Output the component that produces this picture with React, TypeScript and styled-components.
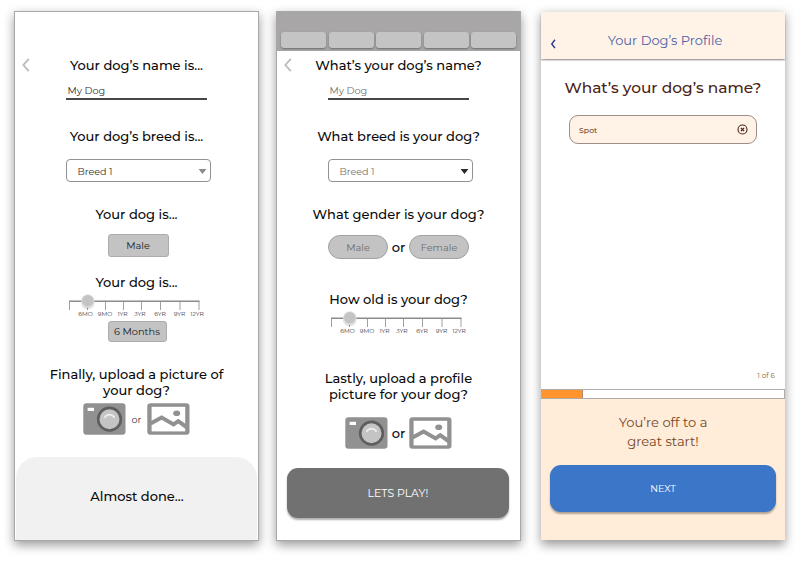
import React from 'react';
import styled, { createGlobalStyle } from 'styled-components';

const GlobalStyle = createGlobalStyle`
  *, *::before, *::after { box-sizing: border-box; }
  body { margin: 0; background: #fff; font-family: Montserrat, Inter, 'Open Sans', sans-serif; }
  button, input { font: inherit; }
`;

const Board = styled.main`
  display: flex;
  align-items: flex-start;
  width: 800px;
  height: 561px;
  padding: 11px 0 0 14px;
  overflow: hidden;
`;

const Phone = styled.section<{ $gap?: number; $bare?: boolean }>`
  display: flex;
  flex-direction: column;
  align-items: center;
  flex: none;
  width: ${p => (p.$bare ? 244 : 245)}px;
  height: 530px;
  margin-left: ${p => p.$gap ?? 0}px;
  border: 1px solid ${p => (p.$bare ? 'transparent' : '#a8a8a8')};
  border-width: ${p => (p.$bare ? '1px 0' : '1px')};
  background: #fff;
  background-clip: padding-box;
  box-shadow: 0 4px 10px rgba(0, 0, 0, 0.4);
`;

const TitleRow = styled.div<{ $top: number }>`
  display: grid;
  grid-template-columns: 28px 1fr 28px;
  align-items: center;
  align-self: stretch;
  margin-top: ${p => p.$top}px;

  svg { justify-self: center; margin-left: -6px; }
`;

const Title = styled.h2<{ $top?: number }>`
  margin: ${p => p.$top ?? 0}px 0 0;
  font-size: 13px;
  font-weight: 500;
  line-height: 18px;
  text-align: center;
  white-space: nowrap;
  color: #080808;
`;

const TwoLineTitle = styled(Title)`
  line-height: 16px;
`;

const UnderlinedField = styled.div<{ $muted?: boolean }>`
  width: 141px;
  height: 20px;
  margin-top: 6px;
  padding: 3px 0 0 1.5px;
  border-bottom: 2px solid #4a4647;
  font-size: 9.7px;
  line-height: 16px;
  color: ${p => (p.$muted ? '#707070' : '#303030')};
`;

const Select = styled.div<{ $muted?: boolean }>`
  display: flex;
  align-items: center;
  justify-content: space-between;
  width: 145px;
  height: 23px;
  margin: 14px 0 0 3px;
  padding: 1px 3px 0 11px;
  border: 1.3px solid #929292;
  border-radius: 4px;
  font-size: 9.6px;
  color: ${p => (p.$muted ? '#707070' : '#303030')};
`;

const Tag = styled.div<{ $top: number; $w: number; $h: number; $shift?: number }>`
  display: grid;
  place-items: center;
  width: ${p => p.$w}px;
  height: ${p => p.$h}px;
  margin: ${p => p.$top}px 0 0 ${p => p.$shift ?? 0}px;
  border: 1px solid #acacac;
  border-radius: 3px;
  background: #c3c3c3;
  font-size: 9.8px;
  color: #202020;
`;

const PillRow = styled.div`
  display: flex;
  align-items: center;
  justify-content: space-between;
  width: 141px;
  height: 24px;
  margin-top: 12px;
`;

const Pill = styled.button`
  width: 60px;
  height: 24px;
  padding: 0;
  border: 1px solid #a2a2a2;
  border-radius: 12px;
  background: #c3c3c3;
  font-size: 9.8px;
  color: #6f6f6f;
`;

const Or = styled.span<{ $small?: boolean }>`
  font-size: ${p => (p.$small ? 9.6 : 13)}px;
  font-weight: ${p => (p.$small ? 400 : 500)};
  color: ${p => (p.$small ? '#333' : '#080808')};
`;

const SliderBox = styled.div`
  width: 141px;
  margin-top: 2px;

  svg { display: block; overflow: visible; }
`;

const Scale = styled.div`
  display: grid;
  grid-template-columns: 19px 20px 15px 20px 20px 19px 16px;
  justify-items: center;
  padding-left: 10px;
  font-size: 6px;
  line-height: 8px;
  white-space: nowrap;
  color: #333;
`;

const UploadRow = styled.div<{ $top: number }>`
  display: flex;
  align-items: center;
  justify-content: space-between;
  width: 107px;
  height: 32px;
  margin-top: ${p => p.$top}px;
`;

const DoneFooter = styled.footer`
  display: grid;
  place-items: center;
  align-self: stretch;
  height: 83px;
  margin: auto 1px 0;
  padding: 0 0 5px 1px;
  border-radius: 21px 21px 0 0;
  background: #f1f1f1;
`;

const TabHeader = styled.header`
  display: flex;
  align-items: flex-start;
  justify-content: space-between;
  align-self: stretch;
  height: 39px;
  padding: 20px 4px 0 4px;
  background: #a8a6a6;
`;

const Tab = styled.div`
  width: 45px;
  height: 16px;
  border-radius: 3px;
  background: #c4c4c4;
  box-shadow: 0 1px 2px rgba(0, 0, 0, 0.35);
`;

const ActionButton = styled.button<{ $primary?: boolean }>`
  width: ${p => (p.$primary ? 226 : 222)}px;
  height: ${p => (p.$primary ? 47 : 50)}px;
  margin-top: ${p => (p.$primary ? 14 : 19)}px;
  margin-left: ${p => (p.$primary ? 0 : -1)}px;
  padding: 0;
  border: 0;
  border-radius: 11px;
  background: ${p => (p.$primary ? '#3b76c9' : '#717171')};
  box-shadow: 0 2px 2px rgba(0, 0, 0, 0.32);
  font-size: ${p => (p.$primary ? 9.6 : 10.9)}px;
  font-weight: 400;
  color: #fff;
`;

const ProfileHeader = styled.header`
  display: grid;
  grid-template-columns: 24px 1fr 20px;
  align-self: stretch;
  height: 47px;
  padding-top: 19px;
  background: #fff3e8;
  box-shadow: 0 1.5px 1.5px rgba(60, 45, 45, 0.45);

  svg { justify-self: center; margin-top: 8px; }
`;

const ProfileTitle = styled.h1`
  margin: 0;
  font-size: 13px;
  font-weight: 400;
  line-height: 18px;
  text-align: center;
  white-space: nowrap;
  color: #4d60a6;
`;

const Question = styled.h2`
  margin: 19px 0 0;
  font-size: 15.4px;
  font-weight: 500;
  line-height: 20px;
  white-space: nowrap;
  color: #4a2114;
`;

const NameField = styled.div`
  display: flex;
  align-items: center;
  justify-content: space-between;
  width: 188px;
  height: 29px;
  margin-top: 17px;
  padding: 0 8px 0 9px;
  border: 1px solid #a08c89;
  border-radius: 9px;
  background: #fff3e8;
  font-size: 7.8px;
  font-weight: 500;
  color: #764524;
`;

const StepCount = styled.div`
  align-self: flex-end;
  margin: auto 10px 8px 0;
  font-size: 7.2px;
  line-height: 10px;
  color: #8a5f44;
`;

const Progress = styled.div`
  flex: none;
  align-self: stretch;
  height: 10px;
  border: 1px solid #b0aaa8;
  background: #fff;
`;

const ProgressFill = styled.div`
  width: 41px;
  height: 100%;
  border-right: 1px solid #b08a6c;
  background: #ff932e;
`;

const ProfileFooter = styled.footer`
  display: flex;
  flex-direction: column;
  align-items: center;
  align-self: stretch;
  height: 141px;
  padding-top: 14px;
  background: #ffedda;
`;

const Cheer = styled.p`
  margin: 0;
  font-size: 13.1px;
  line-height: 19px;
  text-align: center;
  white-space: nowrap;
  color: #764524;
`;

const BackChevron = () => (
  <svg width="8" height="14" viewBox="0 0 8 14" fill="none">
    <path d="M6.8 0.8L1.4 7l5.4 6.2" stroke="#bdbdbd" strokeWidth="1.9" />
  </svg>
);

const Caret = ({ color }: { color: string }) => (
  <svg width="9" height="5" viewBox="0 0 9 5">
    <path d="M0.6 0.1h7.8L4.5 4.9z" fill={color} />
  </svg>
);

const CameraIcon = () => (
  <svg width="43" height="32" viewBox="0 0 43 32">
    <rect x="0.3" y="0.3" width="42.2" height="31.4" rx="3.2" fill="#919191" />
    <rect x="4.6" y="4.8" width="6.4" height="3.2" fill="#fff" />
    <circle cx="26.5" cy="16.2" r="11.3" fill="#c4c4c4" stroke="#5e5e5e" strokeWidth="2.6" />
    <path d="M21.5 14.8c2-4.2 8-4.2 10 0" fill="none" stroke="#ededed" strokeWidth="1.7" />
  </svg>
);

const PictureIcon = () => (
  <svg width="43" height="32" viewBox="0 0 43 32">
    <rect x="0.3" y="0.3" width="42.2" height="31.4" rx="3.2" fill="#919191" />
    <rect x="4.6" y="3.8" width="33.6" height="24.6" fill="#fff" />
    <ellipse cx="29.7" cy="10.3" rx="3.5" ry="2.8" fill="#919191" />
    <path d="M3.6 20.6L14.6 14.6 26.6 21.4 31.2 18.2 39.4 24" fill="none" stroke="#919191" strokeWidth="4" />
  </svg>
);

const TICKS = [3.5, 21.5, 39.5, 57.5, 75.5, 94.5, 114, 133];
const AGES = ['6MO', '9MO', '1YR', '3YR', '6YR', '9YR', '12YR'];

const AgeSlider = () => (
  <SliderBox>
    <svg width="141" height="17" viewBox="0 0 141 17">
      {TICKS.map(x => (
        <path key={x} d={`M${x} 8V17`} stroke="#a0a0a0" strokeWidth="1" />
      ))}
      <path d="M3 8.2H133.5" stroke="#8c8c8c" strokeWidth="1.6" />
      <circle cx="21.8" cy="9.4" r="6.8" fill="#000" opacity="0.12" />
      <circle cx="21.8" cy="8" r="6.7" fill="#e3e3e3" />
      <circle cx="21.8" cy="7.8" r="5.8" fill="#c4c4c4" />
    </svg>
    <Scale>
      {AGES.map(age => (
        <span key={age}>{age}</span>
      ))}
    </Scale>
  </SliderBox>
);

const SummaryScreen = () => (
  <Phone>
    <TitleRow $top={44}>
      <BackChevron />
      <Title>Your dog’s name is...</Title>
    </TitleRow>
    <UnderlinedField>My Dog</UnderlinedField>
    <Title $top={27}>Your dog’s breed is...</Title>
    <Select>
      Breed 1
      <Caret color="#8a8a8a" />
    </Select>
    <Title $top={23}>Your dog is...</Title>
    <Tag $top={11} $w={61} $h={23} $shift={3}>Male</Tag>
    <Title $top={16}>Your dog is...</Title>
    <AgeSlider />
    <Tag $top={3} $w={59} $h={21} $shift={1}>6 Months</Tag>
    <TwoLineTitle $top={24}>
      Finally, upload a picture of
      <br />
      your dog?
    </TwoLineTitle>
    <UploadRow $top={5}>
      <CameraIcon />
      <Or $small>or</Or>
      <PictureIcon />
    </UploadRow>
    <DoneFooter>
      <Title>Almost done...</Title>
    </DoneFooter>
  </Phone>
);

const FormScreen = () => (
  <Phone $gap={17}>
    <TabHeader>
      {[0, 1, 2, 3, 4].map(i => (
        <Tab key={i} />
      ))}
    </TabHeader>
    <TitleRow $top={5}>
      <BackChevron />
      <Title>What’s your dog’s name?</Title>
    </TitleRow>
    <UnderlinedField $muted>My Dog</UnderlinedField>
    <Title $top={27}>What breed is your dog?</Title>
    <Select $muted>
      Breed 1
      <Caret color="#2a2a2a" />
    </Select>
    <Title $top={23}>What gender is your dog?</Title>
    <PillRow>
      <Pill>Male</Pill>
      <Or>or</Or>
      <Pill>Female</Pill>
    </PillRow>
    <Title $top={31}>How old is your dog?</Title>
    <AgeSlider />
    <TwoLineTitle $top={35}>
      Lastly, upload a profile
      <br />
      picture for your dog?
    </TwoLineTitle>
    <UploadRow $top={15}>
      <CameraIcon />
      <Or>or</Or>
      <PictureIcon />
    </UploadRow>
    <ActionButton>LETS PLAY!</ActionButton>
  </Phone>
);

const ProfileScreen = () => (
  <Phone $gap={20} $bare>
    <ProfileHeader>
      <svg width="7" height="10" viewBox="0 0 7 10" fill="none">
        <path d="M5 0.8L1.8 4.9 5 9.1" stroke="#2b3a95" strokeWidth="1.5" />
      </svg>
      <ProfileTitle>Your Dog’s Profile</ProfileTitle>
    </ProfileHeader>
    <Question>What’s your dog’s name?</Question>
    <NameField>
      Spot
      <svg width="11" height="11" viewBox="0 0 11 11" fill="none" stroke="#4a2114">
        <circle cx="5.5" cy="5.5" r="4.5" strokeWidth="1.1" />
        <path d="M3.9 3.9l3.2 3.2M7.1 3.9L3.9 7.1" strokeWidth="1.3" />
      </svg>
    </NameField>
    <StepCount>1 of 6</StepCount>
    <Progress>
      <ProgressFill />
    </Progress>
    <ProfileFooter>
      <Cheer>
        You’re off to a
        <br />
        great start!
      </Cheer>
      <ActionButton $primary>NEXT</ActionButton>
    </ProfileFooter>
  </Phone>
);

export default function App() {
  return (
    <>
      <GlobalStyle />
      <Board>
        <SummaryScreen />
        <FormScreen />
        <ProfileScreen />
      </Board>
    </>
  );
}
